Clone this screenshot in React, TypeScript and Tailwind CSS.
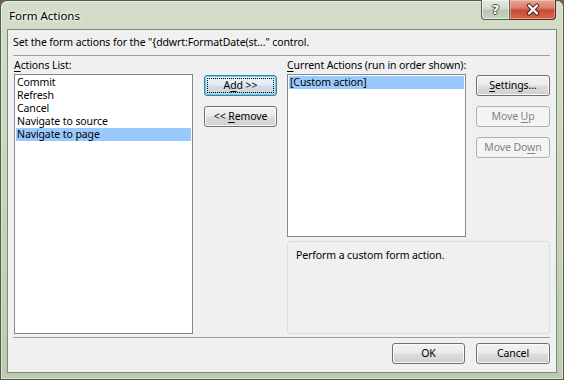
import React from "react";

type Variant = "normal" | "focus" | "disabled";

function Btn({ children, v = "normal", className = "" }: { children: React.ReactNode; v?: Variant; className?: string }) {
  const look =
    v === "focus"
      ? "border-[#3c7fb1] bg-[linear-gradient(180deg,#eef4f8_0%,#e5ecf1_48%,#d4dee5_52%,#c7d3dc_100%)] shadow-[inset_0_0_0_1px_#66cdf5] outline-1 outline-dotted outline-black outline-offset-[-4px]"
      : v === "disabled"
      ? "border-[#adb2b5] bg-[#f4f4f4] text-[#838383]"
      : "border-[#707070] bg-[linear-gradient(180deg,#f2f2f2_0%,#ebebeb_48%,#dddddd_52%,#cfcfcf_100%)] shadow-[inset_0_0_0_1px_rgba(255,255,255,0.85)]";
  return (
    <div className={`flex h-[21px] items-center justify-center rounded-[3px] border ${look} ${className}`}>
      <span>{children}</span>
    </div>
  );
}

const U = ({ children }: { children: React.ReactNode }) => <span className="underline underline-offset-[2px]">{children}</span>;

const actions = ["Commit", "Refresh", "Cancel", "Navigate to source", "Navigate to page"];

export default function App() {
  return (
    <div className="h-[380px] w-[564px] bg-[#7d5a4c] font-['Noto_Sans',sans-serif] text-[10.5px] leading-[13px] tracking-[-0.1px] text-black">
      <div className="flex h-full flex-col rounded-t-[7px] border border-[#4f5d4b] bg-[linear-gradient(180deg,#d3ddc9_0%,#c9d5bd_45%,#bccbae_100%)] px-[6px] pb-[6px] shadow-[inset_0_0_0_1px_rgba(255,255,255,0.45)]">
        {/* title bar */}
        <div className="flex h-[28px] shrink-0 items-start justify-between">
          <span className="pl-[2px] pt-[7px] text-[11.5px] leading-[15px] tracking-normal [text-shadow:0_0_5px_#fff,0_0_3px_#fff]">Form Actions</span>
          <div className="-mt-[1px] mr-[1px] flex">
            <div className="flex h-[20px] w-[29px] items-center justify-center rounded-bl-[4px] border border-t-0 border-[#56644f] bg-[linear-gradient(180deg,#e4ebe0_0%,#d2dccd_45%,#b8c5b1_55%,#c9d4c2_100%)] shadow-[inset_0_0_0_1px_rgba(255,255,255,0.5)]">
              <span className="font-['DejaVu_Sans',sans-serif] text-[13px] font-bold leading-none text-white [text-shadow:1px_0_0_#4a4f4a,-1px_0_0_#4a4f4a,0_1px_0_#4a4f4a,0_-1px_0_#4a4f4a]">?</span>
            </div>
            <div className="flex h-[20px] w-[46px] items-center justify-center rounded-br-[4px] border border-l-0 border-t-0 border-[#5a2a20] bg-[linear-gradient(180deg,#e8a696_0%,#d9806d_40%,#c64b33_55%,#d5694e_100%)] shadow-[inset_0_0_0_1px_rgba(255,220,210,0.45)]">
              <svg width="16" height="13" viewBox="0 0 16 13">
                <path d="M4 2.5 L12 10.5 M12 2.5 L4 10.5" stroke="#47201a" strokeWidth="4.2" strokeLinecap="round" />
                <path d="M4 2.5 L12 10.5 M12 2.5 L4 10.5" stroke="#ffffff" strokeWidth="2.4" strokeLinecap="round" />
              </svg>
            </div>
          </div>
        </div>

        {/* client area */}
        <div className="flex flex-1 flex-col border border-[#7c8a78] bg-[#f0f0f0] pb-[8px] pl-[5px] pr-[6px] pt-[5px]">
          <p className="h-[15px] leading-[15px]">Set the form actions for the "{"{"}ddwrt:FormatDate(st…" control.</p>
          <div className="mt-[5px] h-px bg-[#a0a0a0]" />

          <div className="mt-[2px] flex">
            <div className="ml-[1px] flex w-[179px] flex-col">
              <div className="h-[15px] leading-[15px]">
                <U>A</U>ctions List:
              </div>
              <div className="mt-[1px] h-[260px] border border-[#828790] bg-white p-[1px]">
                {actions.map((a, i) => (
                  <div key={a} className={`h-[13px] pl-[1px] ${i === 4 ? "bg-[#99c9fd]" : ""}`}>
                    {a}
                  </div>
                ))}
              </div>
            </div>

            <div className="ml-[11px] flex w-[73px] flex-col gap-[10px] pt-[17px]">
              <Btn v="focus">
                A<U>d</U>d &gt;&gt;
              </Btn>
              <Btn>
                &lt;&lt; <U>R</U>emove
              </Btn>
            </div>

            <div className="ml-[10px] flex flex-col">
              <div className="h-[15px] leading-[15px]">
                <U>C</U>urrent Actions (run in order shown):
              </div>
              <div className="mt-[1px] flex">
                <div className="h-[163px] w-[179px] border border-[#828790] bg-white p-[1px]">
                  <div className="h-[13px] bg-[#99c9fd] pl-[1px]">[Custom action]</div>
                </div>
                <div className="ml-[10px] flex w-[74px] flex-col gap-[10px] pt-[1px]">
                  <Btn>
                    <U>S</U>ettings...
                  </Btn>
                  <Btn v="disabled">
                    Move <U>U</U>p
                  </Btn>
                  <Btn v="disabled">
                    Move Do<U>w</U>n
                  </Btn>
                </div>
              </div>
              <div className="mt-[4px] h-[93px] w-[263px] rounded-[3px] border border-[#d5dee6] px-[8px] pt-[7px]">
                Perform a custom form action.
              </div>
            </div>
          </div>

          <div className="mt-[3px] h-px bg-[#a0a0a0]" />
          <div className="mt-[5px] flex justify-end gap-[11px]">
            <Btn className="w-[73px]">OK</Btn>
            <Btn className="w-[74px]">Cancel</Btn>
          </div>
        </div>
      </div>
    </div>
  );
}
